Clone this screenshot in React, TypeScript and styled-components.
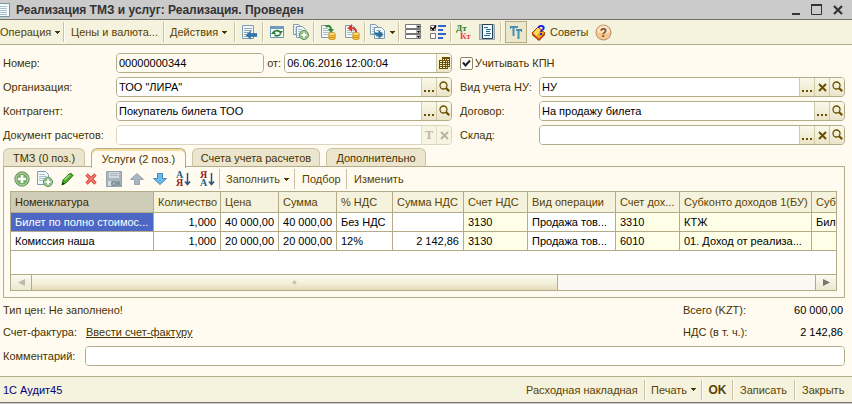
import React from 'react';
import styled, { createGlobalStyle, css } from 'styled-components';

const C = {
  line: '#b3ac86',
  bar: '#f5f2dd',
  page: '#fffbf0',
  label: '#473200',
  tool: '#5a4300',
  glyph: '#6a4f00',
};

const GlobalStyle = createGlobalStyle`
  * { box-sizing: border-box; }
  body { margin: 0; background: ${C.page}; }
  body, button, input, table {
    font-family: "Liberation Sans", Arial, sans-serif;
    font-size: 11px;
    line-height: 14px;
  }
  button { margin: 0; padding: 0; border: 0; background: none; color: inherit; }
  svg { display: block; flex: none; }
`;

const Window = styled.div`
  display: flex;
  flex-direction: column;
  min-height: 100vh;
  background: ${C.page};
  color: ${C.label};
  overflow: hidden;
`;

const TitleBar = styled.header`
  display: flex;
  align-items: center;
  height: 20px;
  padding-right: 4px;
  background: #cbcbcb;
  border-bottom: 1px solid #77716a;
`;

const Title = styled.h1`
  flex: 1;
  margin: 0 0 0 6px;
  font-size: 12px;
  line-height: 16px;
  font-weight: bold;
  color: #333;
  white-space: nowrap;
`;

const CaptionButton = styled.button`
  display: grid;
  place-items: center;
  width: 21px;
  height: 18px;
`;

const ToolBar = styled.div`
  display: flex;
  align-items: center;
  height: 25px;
  background: ${C.bar};
  border-bottom: 1px solid ${C.line};
  color: ${C.tool};
`;

const ToolButton = styled.button<{ $w?: number; $on?: boolean; $lead?: number; $bold?: boolean }>`
  display: flex;
  align-items: center;
  justify-content: ${p => (p.$lead === undefined ? 'center' : 'flex-start')};
  gap: 4px;
  flex: none;
  width: ${p => (p.$w ? `${p.$w}px` : 'auto')};
  height: 22px;
  padding-left: ${p => p.$lead ?? 0}px;
  white-space: nowrap;
  ${p =>
    p.$bold &&
    css`
      font-size: 12px;
      font-weight: bold;
    `}
  ${p =>
    p.$on &&
    css`
      margin: 0 5px 0 3px;
      background: #ece6cb;
      border: 1px solid ${C.line};
    `}
`;

const Separator = styled.span`
  flex: none;
  width: 2px;
  height: 20px;
  background: linear-gradient(90deg, #c9c3a4 50%, #fffef6 50%);
`;

const Form = styled.form`
  display: grid;
  grid-template-columns: 113px minmax(0, 336fr) 87px minmax(0, 306fr);
  row-gap: 4px;
  align-items: center;
  padding: 8px 7px 0 3px;
`;

const Label = styled.label<{ $inset?: boolean }>`
  padding-left: ${p => (p.$inset ? 8 : 0)}px;
  white-space: nowrap;
`;

const Field = styled.div<{ $muted?: boolean; $grow?: number }>`
  display: flex;
  flex: ${p => p.$grow ?? 1} 1 0;
  min-width: 0;
  height: 20px;
  overflow: hidden;
  background: #fff;
  border: 1px solid ${p => (p.$muted ? '#d9d5bf' : C.line)};
  border-radius: 4px;
`;

const TextBox = styled.input<{ $shade?: boolean }>`
  flex: 1;
  min-width: 0;
  width: 100%;
  padding: 0 2px;
  border: 0;
  outline: 0;
  color: #000;
  background: ${p => (p.$shade ? C.page : '#fff')};
`;

const FieldButton = styled.button`
  display: grid;
  place-items: center;
  width: 15px;
  flex: none;
  color: ${C.glyph};
  background: linear-gradient(#fbf9ec, #ebe5c8);
  border-left: 1px solid #cfc9a8;
  &:disabled { color: #b9b5a4; background: #f7f4e2; border-color: #e2dec8; }
`;

const NumberRow = styled.div`
  display: flex;
  align-items: center;
  gap: 3px;
`;

const CheckLabel = styled.label`
  display: flex;
  align-items: center;
  gap: 2px;
  grid-column: 3 / -1;
  padding-left: 8px;
`;

const CheckBox = styled.input`
  appearance: none;
  width: 13px;
  height: 13px;
  margin: 0;
  border: 1px solid #8d8563;
  border-radius: 2px;
  background: #fff;
  &:checked {
    background: #fff url("data:image/svg+xml,%3Csvg xmlns='http://www.w3.org/2000/svg' viewBox='0 0 11 11'%3E%3Cpath d='M2 4.5l2.5 3L9 2.5' fill='none' stroke='%23222' stroke-width='2'/%3E%3C/svg%3E");
  }
`;

const Tabs = styled.div`
  display: flex;
  gap: 6px;
  margin: 3px 7px 0 3px;
  height: 19px;
`;

const Tab = styled.button<{ $w: number; $active?: boolean }>`
  width: ${p => p.$w}px;
  height: ${p => (p.$active ? 20 : 19)}px;
  color: ${C.label};
  background: ${p => (p.$active ? C.page : '#ebe5cd')};
  border: 1px solid ${p => (p.$active ? C.line : '#cbc5a5')};
  border-bottom: ${p => (p.$active ? '0' : `1px solid ${C.line}`)};
  border-radius: 6px 6px 0 0;
  box-shadow: ${p => (p.$active ? 'inset 0 2px 0 #f5dfa0' : 'none')};
  white-space: nowrap;
  z-index: 1;
`;

const Panel = styled.section`
  margin: -1px 7px 0 3px;
  padding: 0 7px 6px 6px;
  border: 1px solid ${C.line};
`;

const GridTools = styled.div`
  display: flex;
  align-items: center;
  height: 24px;
  color: ${C.tool};
`;

const GridFrame = styled.div`
  border: 1px solid ${C.line};
  background: #fff;
  overflow: hidden;
`;

const Table = styled.table`
  width: 100%;
  table-layout: fixed;
  border-collapse: separate;
  border-spacing: 0;
`;

const Col = styled.col<{ $w?: number }>`
  width: ${p => (p.$w ? `${p.$w}px` : 'auto')};
`;

const Head = styled.th<{ $current?: boolean }>`
  height: 21px;
  padding: 0 0 0 4px;
  text-align: left;
  font-weight: normal;
  white-space: nowrap;
  overflow: hidden;
  color: ${p => (p.$current ? '#3b2a00' : C.tool)};
  background: ${p => (p.$current ? '#cfccb7' : C.bar)};
  border-right: 1px solid ${C.line};
  border-bottom: 1px solid ${C.line};
  &:last-child { border-right: 0; }
`;

const Cell = styled.td<{ $right?: boolean; $tint?: boolean; $current?: boolean }>`
  height: 19px;
  padding: 0 4px;
  text-align: ${p => (p.$right ? 'right' : 'left')};
  white-space: nowrap;
  overflow: hidden;
  color: ${p => (p.$current ? '#fff' : '#000')};
  background: ${p => (p.$current ? '#4d68c4' : p.$tint ? '#ffffe8' : '#fff')};
  border-right: 1px solid ${C.line};
  border-bottom: 1px solid ${C.line};
  &:last-child { border-right: 0; padding-right: 0; }
`;

const ScrollBar = styled.div`
  display: flex;
  height: 16px;
  margin-top: 23px;
  border-top: 1px solid ${C.line};
  background: #faf8f3;
`;

const ScrollButton = styled.button`
  display: grid;
  place-items: center;
  width: 21px;
  background: linear-gradient(#fbfaf2, #ebe7d0);
  &:first-child { border-right: 1px solid ${C.line}; }
  &:last-child { border-left: 1px solid ${C.line}; }
`;

const Thumb = styled.div`
  flex: 526;
  display: grid;
  place-items: center;
  background: linear-gradient(#fbfaf0, #f3efd9 55%, #e3dcb8);
  border-right: 1px solid ${C.line};
`;

const Track = styled.div`
  flex: 258;
`;

const Summary = styled.div`
  display: grid;
  grid-template-columns: 83px minmax(0, 1fr) 80px 80px;
  row-gap: 8px;
  padding: 5px 9px 0 3px;
  white-space: nowrap;
`;

const Wide = styled.span`
  grid-column: 1 / 3;
`;

const Amount = styled.output`
  text-align: right;
  color: #000;
`;

const Link = styled.a`
  color: ${C.label};
  text-decoration: underline;
`;

const Comment = styled.div`
  display: grid;
  grid-template-columns: 82px minmax(0, 1fr);
  align-items: center;
  padding: 7px 7px 0 3px;
`;

const Footer = styled.footer`
  display: flex;
  align-items: center;
  height: 26px;
  margin-top: auto;
  padding-left: 3px;
  background: ${C.bar};
  border-top: 1px solid ${C.line};
  color: ${C.tool};
`;

const Product = styled.span`
  flex: 1;
  color: #00007c;
`;

const BottomEdge = styled.div`
  height: 2px;
  background: #d0d0d0;
  border-top: 1px solid #77716a;
`;

/* ---------- icons ---------- */

const Caret = () => (
  <svg width="5" height="3" viewBox="0 0 5 3" shapeRendering="crispEdges"><path d="M0 0h5v1H4v1H3v1H2V2H1V1H0z" fill="#4a3600" /></svg>
);

const Dots = () => (
  <svg width="11" height="14" viewBox="0 0 11 14"><path d="M0 10h2v2H0zM4 10h2v2H4zM8 10h2v2H8z" fill="currentColor" /></svg>
);

const Cross = () => (
  <svg width="9" height="9" viewBox="0 0 9 9"><path d="M1 1l7 7M8 1l-7 7" stroke="currentColor" strokeWidth="2" /></svg>
);

const Lens = () => (
  <svg width="11" height="12" viewBox="0 0 11 12">
    <circle cx="4.500" cy="4.500" r="3.500" fill="none" stroke="currentColor" strokeWidth="1.300" />
    <path d="M7 7l3.200 3.200" stroke="currentColor" strokeWidth="2.200" />
  </svg>
);

const LetterT = () => (
  <svg width="10" height="12" viewBox="0 0 10 12">
    <text x="5" y="10" textAnchor="middle" fontFamily="Liberation Serif, serif" fontWeight="bold" fontSize="12" fill="currentColor">T</text>
  </svg>
);

const Calendar = () => (
  <svg width="11" height="12" viewBox="0 0 11 12" shapeRendering="crispEdges">
    <path d="M3 0h8v10H9v2H0V3h3z" fill={C.glyph} />
    <path d="M4 2h1v1H4zM6 2h1v1H6zM8 2h2v1H8zM1 4h2v1H1zM4 4h2v1H4zM7 4h1v1H7zM9 4h1v1H9zM1 6h2v1H1zM4 6h2v1H4zM7 6h1v1H7zM9 6h1v1H9zM1 8h2v1H1zM4 8h2v1H4zM7 8h1v1H7zM9 8h1v1H9zM1 10h2v1H1zM4 10h2v1H4zM7 10h1v1H7z" fill="#f6f2da" />
  </svg>
);

const Plus = ({ x, y, r }: { x: number; y: number; r: number }) => (
  <g>
    <circle cx={x} cy={y} r={r} fill="#78b06a" stroke="#5a8a56" />
    <circle cx={x} cy={y} r={r - 1} fill="none" stroke="#b5d8a8" strokeWidth="1" />
    <path d={`M${x} ${y - r + 2}v${2 * r - 4}M${x - r + 2} ${y}h${2 * r - 4}`} stroke="#fff" strokeWidth="2" />
  </g>
);

const Sheet = ({ x = 1, y = 1, w = 11, h = 13 }: { x?: number; y?: number; w?: number; h?: number }) => (
  <g>
    <path d={`M${x + 0.5} ${y + 0.5}h${w - 4}l3 3v${h - 4}h-${w - 1}z`} fill="#f3f8fb" stroke="#7d9cb0" />
    <path d={`M${x + 2} ${y + 3.5}h${w - 6}M${x + 2} ${y + 5.5}h${w - 4}M${x + 2} ${y + 7.5}h${w - 4}M${x + 2} ${y + 9.5}h${w - 4}`} stroke="#a9bfcc" />
  </g>
);

const TitleIcon = () => (
  <svg width="10" height="16" viewBox="0 0 10 16">
    <path d="M-2 1.500H9.500v13H-2z" fill="#f5fafc" stroke="#7895a6" />
    <path d="M0 4.500h7M0 6.500h7M0 8.500h7M0 10.500h7M0 12.500h7" stroke="#a9c0cd" />
  </svg>
);

const BackList = () => (
  <svg width="16" height="16" viewBox="0 0 16 16">
    <path d="M1.500 1.500h11v13h-11z" fill="#f3f8fb" stroke="#7d9cb0" />
    <path d="M3 4.500h8M3 6.500h8M3 8.500h4M3 10.500h2M3 12.500h4" stroke="#92a7b2" />
    <path d="M5 11l4.500-4v2.500H16v3H9.500V15z" fill="#2f78ad" stroke="#1f5f93" strokeWidth=".5" />
  </svg>
);

const Refresh = () => (
  <svg width="16" height="16" viewBox="0 0 16 16">
    <path d="M1.500 2.500h13v11h-13z" fill="#f4f9fb" stroke="#6f95ae" />
    <path d="M1 2h14v3H1z" fill="#6f9cbd" />
    <path d="M4.500 8.500a3.500 2.500 0 0 1 6-1" fill="none" stroke="#237a2b" strokeWidth="1.600" />
    <path d="M11.500 9.500a3.500 2.500 0 0 1-6 1.500" fill="none" stroke="#237a2b" strokeWidth="1.600" />
    <path d="M9 7h5l-2.500 3zM2 10h5L4.500 7z" fill="#237a2b" />
  </svg>
);

const CopyAdd = () => (
  <svg width="16" height="16" viewBox="0 0 16 16">
    <Sheet x={0} y={0} w={9} h={11} />
    <Sheet x={3} y={2} w={10} h={12} />
    <Plus x={11} y={11} r={4.5} />
  </svg>
);

const AddSheet = () => (
  <svg width="16" height="16" viewBox="0 0 16 16">
    <Sheet x={0} y={0} w={12} h={14} />
    <Plus x={11} y={11} r={4.5} />
  </svg>
);

const Coins = () => (
  <g fill="#f6c33a" stroke="#c88a1c" strokeWidth=".8">
    <ellipse cx="12" cy="14" rx="3.500" ry="1.600" />
    <ellipse cx="12" cy="12" rx="3.500" ry="1.600" />
    <ellipse cx="12" cy="10" rx="3.500" ry="1.600" fill="#ffe07a" />
  </g>
);

const Post = () => (
  <svg width="16" height="16" viewBox="0 0 16 16">
    <Sheet x={1} y={1} w={11} h={13} />
    <path d="M5.500 2.500q5-2 5.500 3" fill="none" stroke="#2d8a2f" strokeWidth="2" />
    <path d="M8 5h6l-3 4z" fill="#2d8a2f" />
    <Coins />
  </svg>
);

const Unpost = () => (
  <svg width="16" height="16" viewBox="0 0 16 16">
    <Sheet x={1} y={1} w={11} h={13} />
    <path d="M12 8q0-4-5-4" fill="none" stroke="#db3a2b" strokeWidth="2" />
    <path d="M8 0v8L3.500 4z" fill="#db3a2b" />
    <Coins />
  </svg>
);

const Based = () => (
  <svg width="16" height="16" viewBox="0 0 16 16">
    <Sheet x={0} y={0} w={9} h={11} />
    <Sheet x={4} y={3} w={11} h={12} />
    <path d="M4.500 6q0 3 3 3h1V6l5 4.500-5 4.500v-3q-5 0-4-6z" fill="#2c6f9f" />
  </svg>
);

const ListRows = () => (
  <svg width="16" height="16" viewBox="0 0 16 16">
    {[0, 5, 10].map(y => (
      <g key={y}>
        <path d={`M.500 ${y + 0.5}h15v4H.500z`} fill="#fff" stroke="#777" />
        <path d={`M11 ${y + 1}h4v3h-4z`} fill="#bbb" />
        <path d={`M12 ${y + 2}h3l-1.500 2z`} fill="#000" />
      </g>
    ))}
  </svg>
);

const CheckList = () => (
  <svg width="16" height="16" viewBox="0 0 16 16">
    <path d="M.500 1.500h5v5h-5zM.500 9.500h5v5h-5z" fill="#fff" stroke="#777" />
    <path d="M1 3.500l2 2 3-4" fill="none" stroke="#000" strokeWidth="1.500" />
    <path d="M8 1h8v2H8zM8 5h5v2H8zM8 9h8v2H8zM8 13h5v2H8z" fill="#2f62d0" />
  </svg>
);

const DebitCredit = () => (
  <svg width="17" height="18" viewBox="0 0 17 18" fontFamily="Liberation Serif, serif" fontWeight="bold" fontSize="9">
    <text x="1" y="8" fill="#2b7d12">Дт</text>
    <text x="5" y="16" fill="#e8453c">Кт</text>
  </svg>
);

const Journal = () => (
  <svg width="17" height="18" viewBox="0 0 17 18">
    <path d="M.500 1.500h15v15H.500z" fill="#c3c9cc" stroke="#9da4a8" />
    <path d="M3.500 1.500h10v14h-10z" fill="#f2fbff" stroke="#20445a" />
    <path d="M5 4.500h4M7 6.500h5M7 8.500h4M7 10.500h5M5 12.500h6" stroke="#2b6b8f" />
  </svg>
);

const TypeIcon = () => (
  <svg width="14" height="16" viewBox="0 0 14 16">
    <path d="M1 3h8M4.500 3v9M7 6h6M9.500 6v9" stroke="#4590b5" strokeWidth="2" fill="none" />
    <path d="M1.500 3v2M12.500 6v2" stroke="#4590b5" fill="none" />
  </svg>
);

const Advice = () => (
  <svg width="14" height="17" viewBox="0 0 14 17">
    <path d="M6 3l7 6-6 7-7-7z" fill="#f2a21b" stroke="#8e4a00" />
    <path d="M0 9l7 6 6-6v2l-6 6-7-6z" fill="#b73b10" />
    <path d="M1.500 9L6 3.500l3 3L4.500 12z" fill="#ffd85a" />
    <text x="9" y="11" textAnchor="middle" fontFamily="Liberation Sans, sans-serif" fontWeight="bold" fontSize="14" fill="#1320d8">?</text>
  </svg>
);

const Help = () => (
  <svg width="17" height="17" viewBox="0 0 17 17">
    <circle cx="8.500" cy="8.500" r="7.500" fill="#f8c791" stroke="#b58a6c" />
    <path d="M2 8a6.500 6.500 0 0 1 13 0q-6 3-13 0z" fill="#fde3c4" />
    <text x="8.500" y="13" textAnchor="middle" fontFamily="Liberation Sans, sans-serif" fontWeight="bold" fontSize="12" fill="#7c4a26">?</text>
  </svg>
);

const AddRow = () => (
  <svg width="16" height="16" viewBox="0 0 16 16">
    <circle cx="8" cy="8" r="7.200" fill="#74ad62" stroke="#6f8f6c" />
    <circle cx="8" cy="8" r="6" fill="none" stroke="#b9d9ad" />
    <path d="M8 4v8M4 8h8" stroke="#fff" strokeWidth="2.600" />
  </svg>
);

const Pencil = () => (
  <svg width="14" height="14" viewBox="0 0 14 14">
    <path d="M1 13l1-5 6-6q3-1.500 4 1.500l-6.500 7z" fill="#4fa82c" stroke="#2c7616" />
    <path d="M3.500 8l5-5" stroke="#a7de83" strokeWidth="1.500" />
    <path d="M1 13l.6-3 2.400 2z" fill="#123d08" />
  </svg>
);

const DeleteRow = () => (
  <svg width="12" height="12" viewBox="0 0 12 12">
    <path d="M1.500 1.500l9 9M10.500 1.500l-9 9" stroke="#d94538" strokeWidth="3.200" />
    <path d="M2 2l8 8M10 2l-8 8" stroke="#f58a7c" strokeWidth="1.200" />
  </svg>
);

const SaveRow = () => (
  <svg width="16" height="16" viewBox="0 0 16 16">
    <path d="M.500 .500h15v15H.500z" fill="#a9b6bf" stroke="#93a3ad" />
    <path d="M3 1h10v6H3z" fill="#d4dbdf" />
    <path d="M4 2.500h8M4 4.500h8" stroke="#a9b6bf" />
    <path d="M2 10h3v5H2z" fill="#d4dbdf" />
    <text x="5" y="15" fontFamily="Liberation Sans, sans-serif" fontWeight="bold" fontSize="7" fill="#6f808b">ОК</text>
  </svg>
);

const Arrow = ({ down }: { down?: boolean }) => (
  <svg width="14" height="12" viewBox="0 0 14 12">
    {down ? (
      <path d="M4.500 .500h5v5h4L7 11.500 .500 5.500h4z" fill="#6db9ec" stroke="#4489bb" />
    ) : (
      <path d="M4.500 11.500h5v-5h4L7 .500 .500 6.500h4z" fill="#a9b6bf" stroke="#96a4ae" />
    )}
  </svg>
);

const Sort = ({ desc }: { desc?: boolean }) => (
  <svg width="16" height="18" viewBox="0 0 16 18" fontFamily="Liberation Serif, serif" fontWeight="bold" fontSize="10">
    <text x="1" y="8" fill={desc ? '#9b1c1c' : '#1f5c86'}>{desc ? 'Я' : 'А'}</text>
    <text x="1" y="16" fill={desc ? '#1f5c86' : '#9b1c1c'}>{desc ? 'А' : 'Я'}</text>
    <path d="M12.500 3v11M10 11.500l2.500 3 2.500-3" fill="none" stroke="#2c5676" strokeWidth="1.500" />
  </svg>
);

/* ---------- data ---------- */

const COLUMNS = [
  { title: 'Номенклатура', w: 143 },
  { title: 'Количество', w: 67, right: true },
  { title: 'Цена', w: 58, right: true },
  { title: 'Сумма', w: 58, right: true },
  { title: '% НДС', w: 56 },
  { title: 'Сумма НДС', w: 71, right: true },
  { title: 'Счет НДС', w: 64, tint: true },
  { title: 'Вид операции', w: 88 },
  { title: 'Счет дох...', w: 64, tint: true },
  { title: 'Субконто доходов 1(БУ)', w: 132, tint: true },
  { title: 'Субконто доходов 2(БУ)', tint: true },
];

const ROWS = [
  ['Билет по полно стоимос...', '1,000', '40 000,00', '40 000,00', 'Без НДС', '', '3130', 'Продажа тов...', '3310', 'КТЖ', 'Билет'],
  ['Комиссия наша', '1,000', '20 000,00', '20 000,00', '12%', '2 142,86', '3130', 'Продажа тов...', '6010', '01. Доход от реализа...', ''],
];

type Kind = 'pick' | 'clear' | 'open';

const KINDS = {
  pick: { name: 'Выбрать', icon: <Dots /> },
  clear: { name: 'Очистить', icon: <Cross /> },
  open: { name: 'Открыть', icon: <Lens /> },
};

const PickField = ({ id, value, kinds }: { id: string; value: string; kinds: Kind[] }) => (
  <Field>
    <TextBox id={id} defaultValue={value} />
    {kinds.map(k => (
      <FieldButton key={k} type="button" aria-label={KINDS[k].name}>{KINDS[k].icon}</FieldButton>
    ))}
  </Field>
);

export default function App() {
  return (
    <>
      <GlobalStyle />
      <Window>
        <TitleBar>
          <TitleIcon />
          <Title>Реализация ТМЗ и услуг: Реализация. Проведен</Title>
          <CaptionButton aria-label="Свернуть">
            <svg width="11" height="11" viewBox="0 0 11 11"><path d="M2 9h8v2H2z" fill="#333" /></svg>
          </CaptionButton>
          <CaptionButton aria-label="Развернуть">
            <svg width="11" height="11" viewBox="0 0 11 11"><path d="M.500 1h10v9.500H.500z" fill="none" stroke="#333" /><path d="M0 0h11v2H0z" fill="#333" /></svg>
          </CaptionButton>
          <CaptionButton aria-label="Закрыть окно">
            <svg width="10" height="10" viewBox="0 0 10 10"><path d="M1 1l8 8M9 1l-8 8" stroke="#333" strokeWidth="2.200" /></svg>
          </CaptionButton>
        </TitleBar>

        <ToolBar>
          <ToolButton $w={63} $lead={0}>Операция <Caret /></ToolButton>
          <Separator />
          <ToolButton $w={98} $lead={6}>Цены и валюта...</ToolButton>
          <Separator />
          <ToolButton $w={69} $lead={5}>Действия <Caret /></ToolButton>
          <Separator />
          <ToolButton $w={26} aria-label="К списку"><BackList /></ToolButton>
          <Separator />
          <ToolButton $w={25} aria-label="Обновить"><Refresh /></ToolButton>
          <ToolButton $w={24} aria-label="Скопировать"><CopyAdd /></ToolButton>
          <Separator />
          <ToolButton $w={25} aria-label="Провести"><Post /></ToolButton>
          <ToolButton $w={24} aria-label="Отмена проведения"><Unpost /></ToolButton>
          <Separator />
          <ToolButton $w={32} aria-label="На основании"><Based /> <Caret /></ToolButton>
          <Separator />
          <ToolButton $w={25} aria-label="Список"><ListRows /></ToolButton>
          <ToolButton $w={25} aria-label="Настройка"><CheckList /></ToolButton>
          <Separator />
          <ToolButton $w={23} aria-label="Проводки"><DebitCredit /></ToolButton>
          <ToolButton $w={25} aria-label="Журнал"><Journal /></ToolButton>
          <Separator />
          <ToolButton $w={22} $on aria-label="Шрифт"><TypeIcon /></ToolButton>
          <ToolButton $w={57} $lead={0}><Advice />Советы</ToolButton>
          <ToolButton $w={28} aria-label="Справка"><Help /></ToolButton>
        </ToolBar>

        <Form onSubmit={e => e.preventDefault()}>
          <Label htmlFor="num">Номер:</Label>
          <NumberRow>
            <Field $grow={148}><TextBox id="num" $shade defaultValue="00000000344" /></Field>
            <Label htmlFor="date">от:</Label>
            <Field $grow={168}>
              <TextBox id="date" defaultValue="06.06.2016 12:00:04" />
              <FieldButton type="button" aria-label="Календарь"><Calendar /></FieldButton>
            </Field>
          </NumberRow>
          <CheckLabel><CheckBox type="checkbox" defaultChecked />Учитывать КПН</CheckLabel>

          <Label htmlFor="org">Организация:</Label>
          <PickField id="org" value={'ТОО "ЛИРА"'} kinds={['pick', 'open']} />
          <Label $inset htmlFor="kind">Вид учета НУ:</Label>
          <PickField id="kind" value="НУ" kinds={['pick', 'clear', 'open']} />

          <Label htmlFor="agent">Контрагент:</Label>
          <PickField id="agent" value="Покупатель билета ТОО" kinds={['pick', 'open']} />
          <Label $inset htmlFor="deal">Договор:</Label>
          <PickField id="deal" value="На продажу билета" kinds={['pick', 'open']} />

          <Label htmlFor="doc">Документ расчетов:</Label>
          <Field $muted>
            <TextBox id="doc" disabled />
            <FieldButton type="button" disabled aria-label="Тип"><LetterT /></FieldButton>
            <FieldButton type="button" disabled aria-label="Очистить"><Cross /></FieldButton>
          </Field>
          <Label $inset htmlFor="store">Склад:</Label>
          <PickField id="store" value="" kinds={['pick', 'clear', 'open']} />
        </Form>

        <Tabs role="tablist">
          <Tab role="tab" $w={82}>ТМЗ (0 поз.)</Tab>
          <Tab role="tab" $w={95} $active aria-selected>Услуги (2 поз.)</Tab>
          <Tab role="tab" $w={128}>Счета учета расчетов</Tab>
          <Tab role="tab" $w={100}>Дополнительно</Tab>
        </Tabs>

        <Panel>
          <GridTools>
            <ToolButton $w={23} aria-label="Добавить"><AddRow /></ToolButton>
            <ToolButton $w={23} aria-label="Добавить копированием"><AddSheet /></ToolButton>
            <ToolButton $w={23} aria-label="Изменить строку"><Pencil /></ToolButton>
            <ToolButton $w={23} aria-label="Удалить"><DeleteRow /></ToolButton>
            <ToolButton $w={23} aria-label="Закончить редактирование"><SaveRow /></ToolButton>
            <ToolButton $w={23} aria-label="Вверх"><Arrow /></ToolButton>
            <ToolButton $w={23} aria-label="Вниз"><Arrow down /></ToolButton>
            <ToolButton $w={23} aria-label="По возрастанию"><Sort /></ToolButton>
            <ToolButton $w={25} aria-label="По убыванию"><Sort desc /></ToolButton>
            <Separator />
            <ToolButton $w={73} $lead={5}>Заполнить <Caret /></ToolButton>
            <Separator />
            <ToolButton $w={50} $lead={6}>Подбор</ToolButton>
            <Separator />
            <ToolButton $lead={6}>Изменить</ToolButton>
          </GridTools>
          <GridFrame>
            <Table>
              <colgroup>{COLUMNS.map(c => <Col key={c.title} $w={c.w} />)}</colgroup>
              <thead>
                <tr>{COLUMNS.map((c, i) => <Head key={c.title} $current={i === 0}>{c.title}</Head>)}</tr>
              </thead>
              <tbody>
                {ROWS.map((row, r) => (
                  <tr key={row[0]}>
                    {row.map((text, i) => (
                      <Cell key={i} $right={COLUMNS[i].right} $tint={COLUMNS[i].tint} $current={r === 0 && i === 0}>{text}</Cell>
                    ))}
                  </tr>
                ))}
              </tbody>
            </Table>
            <ScrollBar>
              <ScrollButton aria-label="Влево">
                <svg width="7" height="7" viewBox="0 0 7 7"><path d="M7 0v7L0 3.500z" fill="#bdbaaa" /></svg>
              </ScrollButton>
              <Thumb><svg width="5" height="5" viewBox="0 0 5 5"><circle cx="2.500" cy="2.500" r="2" fill="#c9c5ae" /></svg></Thumb>
              <Track />
              <ScrollButton aria-label="Вправо">
                <svg width="7" height="7" viewBox="0 0 7 7"><path d="M0 0v7l7-3.500z" fill="#77756c" /></svg>
              </ScrollButton>
            </ScrollBar>
          </GridFrame>
        </Panel>

        <Summary>
          <Wide>Тип цен: Не заполнено!</Wide>
          <span>Всего (KZT):</span>
          <Amount>60 000,00</Amount>
          <span>Счет-фактура:</span>
          <span><Link href="#invoice">Ввести счет-фактуру</Link></span>
          <span>НДС (в т. ч.):</span>
          <Amount>2 142,86</Amount>
        </Summary>

        <Comment>
          <Label htmlFor="note">Комментарий:</Label>
          <Field><TextBox id="note" /></Field>
        </Comment>

        <Footer>
          <Product>1С Аудит45</Product>
          <ToolButton $w={124} $lead={6}>Расходная накладная</ToolButton>
          <Separator />
          <ToolButton $w={55} $lead={5}>Печать <Caret /></ToolButton>
          <Separator />
          <ToolButton $w={29} $bold>OK</ToolButton>
          <Separator />
          <ToolButton $w={60} $lead={6}>Записать</ToolButton>
          <Separator />
          <ToolButton $w={56} $lead={6}>Закрыть</ToolButton>
        </Footer>
        <BottomEdge />
      </Window>
    </>
  );
}
